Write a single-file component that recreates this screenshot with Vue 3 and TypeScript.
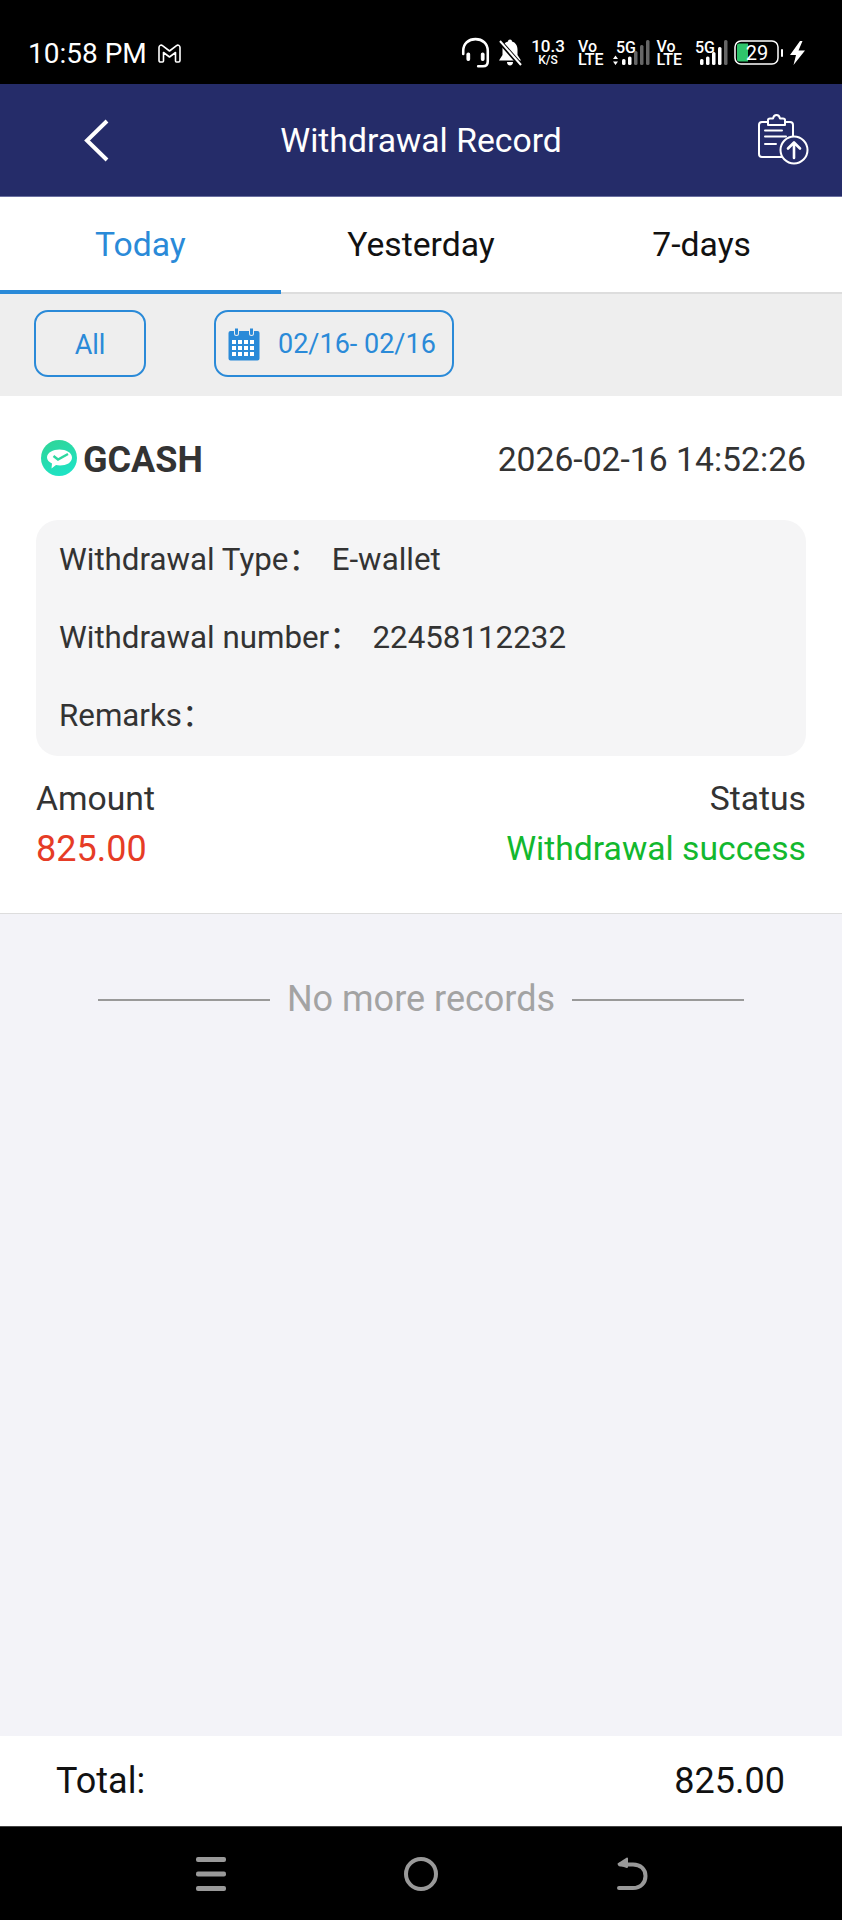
<template>
  <div class="page">
    <!-- phone status bar -->
    <div class="status">
      <span class="time">10:58 PM</span>
      <svg class="gmail" width="25" height="21" viewBox="0 0 25 21" fill="none" stroke="#fff" stroke-width="1.6" stroke-linejoin="round">
        <path d="M2 4.500C2 2.500 4 1.500 5.500 2.600L12.500 8 19.500 2.600C21 1.500 23 2.500 23 4.500V17.500C23 18.500 22.300 19 21.500 19H19.500C18.800 19 18.500 18.500 18.500 18V9.500L12.500 14 6.500 9.500V18C6.500 18.500 6.200 19 5.500 19H3.500C2.700 19 2 18.500 2 17.500Z" />
      </svg>
      <div class="status-right">
        <svg class="s-head" width="29" height="32" viewBox="0 0 27 30" fill="none" stroke="#fff" stroke-width="2.400" stroke-linecap="round">
          <path d="M2 16V13C2 6 7 2 13.500 2S25 6 25 13V23C25 26 23.500 27.500 20.500 27.500H16" />
          <rect x="5.500" y="15" width="2.500" height="7" rx="1.200" fill="#fff" stroke-width="1" />
          <rect x="19" y="15" width="2.500" height="7" rx="1.200" fill="#fff" stroke-width="1" />
        </svg>
        <svg class="s-bell" width="24" height="30" viewBox="0 0 24 30">
          <path fill="#fff" d="M12 1.500C13.200 1.500 14 2.300 14 3.500 17.500 4.500 19.500 7.500 19.500 11.500V17L23 22.500H1L4.500 17V11.500C4.500 7.500 6.500 4.500 10 3.500 10 2.300 10.800 1.500 12 1.500ZM9 24H15C15 26 13.800 27.500 12 27.500S9 26 9 24Z" />
          <path d="M1.500 3L22.500 27" stroke="#000" stroke-width="4.500" />
          <path d="M2 3L23 27" stroke="#fff" stroke-width="2" />
        </svg>
        <div class="speed"><b>10.3</b><i>K/S</i></div>
        <div class="volte"><span>Vo</span><span>LTE</span></div>
        <svg class="s-sig1" width="38" height="30" viewBox="0 0 38 30">
          <text x="3" y="15" class="five-g">5G</text>
          <path d="M0 21l2.500-3.500L5 21ZM0 23.500h5L2.500 27Z" fill="#fff" />
          <rect x="9" y="21" width="3.500" height="6" rx="1.500" fill="#fff" />
          <rect x="15" y="18.500" width="3.500" height="8.500" rx="1.500" fill="#fff" />
          <rect x="21" y="13" width="3.500" height="14" rx="1.500" fill="#666" />
          <rect x="27" y="7" width="3.500" height="20" rx="1.500" fill="#666" />
          <rect x="33" y="2" width="3.500" height="25" rx="1.500" fill="#666" />
        </svg>
        <div class="volte v2"><span>Vo</span><span>LTE</span></div>
        <svg class="s-sig2" width="33" height="30" viewBox="0 0 33 30">
          <text x="0" y="15" class="five-g">5G</text>
          <rect x="5" y="21" width="3.500" height="6" rx="1.500" fill="#fff" />
          <rect x="11" y="18.500" width="3.500" height="8.500" rx="1.500" fill="#fff" />
          <rect x="17" y="14" width="3.500" height="13" rx="1.500" fill="#fff" />
          <rect x="23" y="9" width="3.500" height="18" rx="1.500" fill="#fff" />
          <rect x="29" y="2" width="3.500" height="25" rx="1.500" fill="#666" />
        </svg>
        <svg class="s-batt" width="49" height="26" viewBox="0 0 49 26">
          <rect x="1" y="1" width="43" height="23" rx="6" fill="none" stroke="#fff" stroke-width="1.500" />
          <path d="M5 3.500H14V21.500H5A2 2 0 0 1 3 19.500V5.500A2 2 0 0 1 5 3.500Z" fill="#2fc46b" />
          <text x="23" y="20" text-anchor="middle" class="batt">29</text>
          <rect x="47" y="9" width="2" height="8" rx="1" fill="#fff" />
        </svg>
        <svg class="s-bolt" width="17" height="24" viewBox="0 0 17 24">
          <path fill="#fff" d="M11 0L1 14H7L4.500 24 16 9.500H9.500L13.500 0Z" />
        </svg>
      </div>
    </div>

    <!-- app header -->
    <div class="header">
      <svg class="back" width="25" height="43" viewBox="0 0 25 43" fill="none" stroke="#fff" stroke-width="4">
        <path d="M23 2L3 21.500 23 41" />
      </svg>
      <span class="title">Withdrawal Record</span>
      <svg class="upload" width="58" height="58" viewBox="0 0 58 58" fill="none" stroke="#fff" stroke-width="2" stroke-linecap="round" stroke-linejoin="round">
        <rect x="4" y="11" width="34" height="35" rx="3" />
        <path d="M13 11V9C13 8 14 7.500 15 7.500H18C18.500 5 20 4 21.500 4S24.500 5 25 7.500H28C29 7.500 30 8 30 9V14H13Z" fill="#252c69" />
        <path d="M10 19.500H27M10 25.500H31M10 33H21" />
        <circle cx="39" cy="39" r="13.500" fill="#252c69" />
        <path d="M39 47V32M33 37.500L39 31.500 45 37.500" stroke-width="2.600" />
      </svg>
    </div>

    <!-- tabs -->
    <div class="tabs">
      <div v-for="(tab, i) in tabs" :key="tab" class="tab" :class="{ active: i === 0 }">{{ tab }}</div>
    </div>

    <!-- filters -->
    <div class="filters">
      <div class="chip chip-all"><span>All</span></div>
      <div class="chip chip-date">
        <svg width="32" height="34" viewBox="0 0 32 34">
          <path fill="#2a8ad8" d="M2.500 4H6V6.500A2.500 2.500 0 0 0 11 6.500V4H21V6.500A2.500 2.500 0 0 0 26 6.500V4H29.500A2 2 0 0 1 31.500 6V31.500A2 2 0 0 1 29.500 33.500H2.500A2 2 0 0 1 .5 31.500V6A2 2 0 0 1 2.500 4Z" />
          <path d="M7 1.500H10V6.500A1.500 1.500 0 0 1 7 6.500ZM22 1.500H25V6.500A1.500 1.500 0 0 1 22 6.500Z" fill="#2a8ad8" />
          <g fill="#fff">
            <template v-for="y in [13, 19, 25]" :key="y">
              <rect v-for="x in [4, 10, 16, 22]" :key="x" :x="x" :y="y" width="4" height="4" />
            </template>
          </g>
        </svg>
        <span>02/16- 02/16</span>
      </div>
    </div>

    <!-- record card -->
    <div class="card">
      <div class="card-top">
        <div class="brand">
          <svg width="36" height="36" viewBox="0 0 36 36">
            <defs>
              <linearGradient id="gc" x1="0.2" y1="0" x2="0.6" y2="1">
                <stop offset="0" stop-color="#2fd597" />
                <stop offset="1" stop-color="#1ee3c6" />
              </linearGradient>
            </defs>
            <circle cx="18" cy="18" r="18" fill="url(#gc)" />
            <path fill="#fff" d="M18.500 9.500C25 9.500 31 12.500 31 17.500S25.500 25.500 19 25.500C17.500 25.500 16 25.300 15 25L10.500 28.500 11 23.500C8 22 6 20 6 17.500 6 12.500 12 9.500 18.500 9.500Z" />
            <path d="M12.500 16L17 19.500 27 14" fill="none" stroke="#2dd8a0" stroke-width="2.400" />
          </svg>
          <span class="brand-name">GCASH</span>
        </div>
        <span class="when">2026-02-16 14:52:26</span>
      </div>
      <div class="details">
        <div v-for="row in rows" :key="row.label" class="detail">
          <span>{{ row.label }}：</span><span v-if="row.value" class="detail-value">{{ row.value }}</span>
        </div>
      </div>
      <div class="summary">
        <div class="col">
          <span>Amount</span>
          <span class="amount">825.00</span>
        </div>
        <div class="col col-right">
          <span>Status</span>
          <span class="success">Withdrawal success</span>
        </div>
      </div>
    </div>

    <div class="list-bg">
      <div class="no-more">
        <i></i>
        <span>No more records</span>
        <i></i>
      </div>
    </div>

    <div class="total">
      <span>Total:</span>
      <span>825.00</span>
    </div>

    <!-- android nav bar -->
    <div class="nav">
      <svg width="32" height="34" viewBox="0 0 32 34" fill="#999">
        <rect x="1" y="0" width="30" height="5" rx="2" />
        <rect x="1" y="14.500" width="30" height="5" rx="2" />
        <rect x="1" y="29" width="30" height="5" rx="2" />
      </svg>
      <svg width="34" height="34" viewBox="0 0 34 34" fill="none" stroke="#999" stroke-width="4">
        <circle cx="17" cy="17" r="15" />
      </svg>
      <svg width="32" height="34" viewBox="0 0 32 34" fill="none" stroke="#999" stroke-width="4" stroke-linecap="round">
        <path d="M4 7.500H17C24.500 7.500 29.500 12 29.500 19S24.500 31 17 31H3" />
        <path d="M11 1.500L2.500 7 11 10Z" stroke-width="2" stroke-linejoin="round" fill="#999" />
      </svg>
    </div>
  </div>
</template>

<script setup lang="ts">
const tabs = ['Today', 'Yesterday', '7-days']

const rows = [
  { label: 'Withdrawal Type', value: 'E-wallet' },
  { label: 'Withdrawal number', value: '22458112232' },
  { label: 'Remarks', value: '' },
]
</script>

<style>
html,
body {
  margin: 0;
  background: #f3f3f8;
}
</style>

<style scoped>
.page {
  width: 842px;
  height: 1920px;
  display: flex;
  flex-direction: column;
  font-family: Roboto, 'Noto Sans CJK SC', sans-serif;
  font-size: 33.700px;
  color: #333;
  overflow: hidden;
}

.status {
  height: 84px;
  box-sizing: border-box;
  padding: 22px 36px 0 28px;
  background: #000;
  color: #fff;
  display: flex;
  align-items: center;
}
.time {
  font-size: 28px;
}
.gmail {
  margin-left: 10px;
}
.status-right {
  margin-left: auto;
  display: flex;
  align-items: center;
}
.s-bell {
  margin-left: 8px;
}
.speed {
  display: flex;
  flex-direction: column;
  align-items: center;
  line-height: 14px;
  width: 30px;
  margin-left: 11px;
}
.speed b {
  font-size: 17px;
  font-weight: 500;
}
.speed i {
  font-size: 12px;
  font-style: normal;
  font-weight: 500;
}
.volte {
  display: flex;
  flex-direction: column;
  font-size: 16px;
  font-weight: 500;
  line-height: 13px;
  margin-left: 15px;
}
.volte.v2 {
  margin-left: 6px;
}
.s-sig1 {
  margin-left: 9px;
}
.s-sig2 {
  margin-left: 13px;
}
.s-batt {
  margin-left: 6px;
}
.s-bolt {
  margin-left: 6px;
}
.five-g {
  font-size: 16px;
  font-weight: 500;
  fill: #fff;
}
.batt {
  font-size: 20px;
  fill: #fff;
}

.header {
  height: 112px;
  background: #252c69;
  border-bottom: 1px solid #6a6fa0;
  display: grid;
  grid-template-columns: 1fr auto 1fr;
  align-items: center;
  color: #fff;
}
.back {
  margin-left: 84px;
}
.upload {
  justify-self: end;
  margin-right: 29px;
}

.tabs {
  height: 97px;
  box-sizing: border-box;
  background: #fff;
  border-bottom: 2px solid #ddd;
  display: grid;
  grid-template-columns: repeat(3, 1fr);
  color: #111;
}
.tab {
  height: 97px;
  box-sizing: border-box;
  padding-top: 26px;
  line-height: 44px;
  text-align: center;
}
.tab.active {
  color: #2a8ad8;
  border-bottom: 4px solid #2a8ad8;
}

.filters {
  height: 102px;
  box-sizing: border-box;
  background: #eee;
  padding: 0 0 3px 34px;
  display: flex;
  align-items: center;
  gap: 68px;
  color: #2a8ad8;
  font-size: 27px;
}
.chip {
  height: 67px;
  box-sizing: border-box;
  border: 2px solid #2a8ad8;
  border-radius: 14px;
  display: flex;
  align-items: center;
}
.chip-all {
  width: 112px;
  padding-top: 2px;
  justify-content: center;
}
.chip-date {
  width: 240px;
  padding-left: 12px;
  gap: 18px;
}

.card {
  height: 518px;
  box-sizing: border-box;
  background: #fff;
  border-bottom: 1px solid #ddd;
  padding: 0 36px;
}
.card-top {
  height: 124px;
  box-sizing: border-box;
  padding: 2px 0 0 5px;
  display: flex;
  justify-content: space-between;
  align-items: center;
}
.brand {
  display: flex;
  align-items: center;
  gap: 6px;
}
.brand svg {
  margin-top: -2px;
}
.brand-name {
  font-size: 36px;
  font-weight: 700;
  margin-top: 1px;
}
.details {
  height: 236px;
  box-sizing: border-box;
  background: #f5f5f6;
  border-radius: 22px;
  padding: 0 22px 0 23px;
  display: flex;
  flex-direction: column;
  justify-content: center;
  font-size: 31.300px;
}
.detail {
  line-height: 78px;
}
.detail-value {
  margin-left: 12px;
}
.summary {
  display: flex;
  justify-content: space-between;
  padding-top: 18px;
}
.col {
  display: flex;
  flex-direction: column;
  line-height: 50px;
}
.col-right {
  align-items: flex-end;
}
.amount {
  color: #e63c26;
  font-size: 36px;
}
.success {
  color: #12b82e;
}

.list-bg {
  flex: 1;
  background: #f3f3f8;
  padding-top: 60px;
}
.no-more {
  display: flex;
  justify-content: center;
  align-items: center;
  gap: 17px;
  color: #a3a3a3;
  font-size: 36px;
  line-height: 50px;
}
.no-more i {
  width: 172px;
  height: 2px;
  background: #999;
  margin-top: 2px;
}

.total {
  height: 91px;
  box-sizing: border-box;
  background: #fff;
  padding: 0 57px 0 56px;
  display: flex;
  justify-content: space-between;
  align-items: center;
  color: #111;
  font-size: 36px;
  border-bottom: 1px solid #444;
}

.nav {
  height: 93px;
  background: #000;
  display: grid;
  grid-template-columns: repeat(3, 210.500px);
  justify-content: center;
  justify-items: center;
  align-items: center;
}
</style>
